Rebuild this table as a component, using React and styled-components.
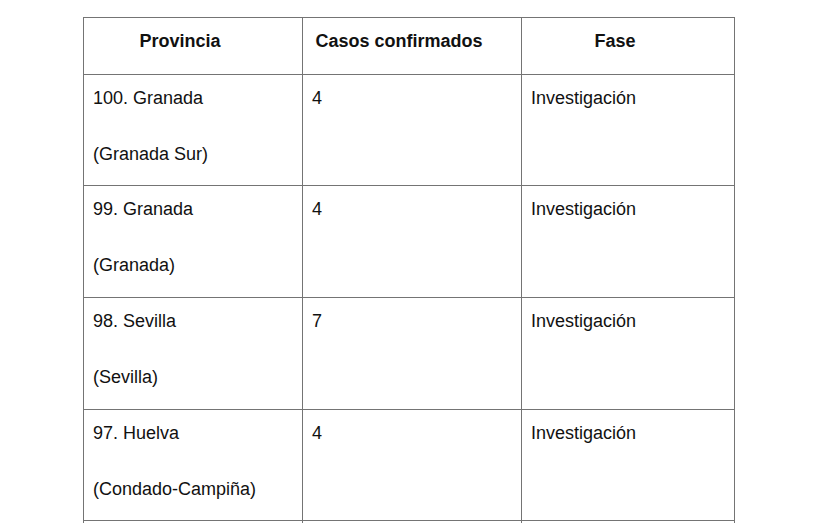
import React from "react";
import styled, { createGlobalStyle } from "styled-components";

const GlobalStyle = createGlobalStyle`
  html, body {
    margin: 0;
    padding: 0;
    background: #ffffff;
    overflow: hidden;
  }
  #root {
    height: 523px;
    overflow: hidden;
  }
`;

const rows = [
  { provincia: "100. Granada", zona: "(Granada Sur)", casos: "4", fase: "Investigación" },
  { provincia: "99. Granada", zona: "(Granada)", casos: "4", fase: "Investigación" },
  { provincia: "98. Sevilla", zona: "(Sevilla)", casos: "7", fase: "Investigación" },
  { provincia: "97. Huelva", zona: "(Condado-Campiña)", casos: "4", fase: "Investigación" },
];

const Page = styled.main`
  padding: 17px 0 0 83px;
  font-family: "Liberation Sans", Arial, Helvetica, sans-serif;
  color: #111111;
`;

const Table = styled.table`
  border-collapse: collapse;
  table-layout: fixed;
  width: 651px;
`;

const Col = styled.col`
  width: ${(p) => p.$w}px;
`;

const HeadCell = styled.th`
  border: 1px solid #747474;
  padding: 5px 35px 14.8px 9px;
  font-size: 18px;
  line-height: 36px;
  font-weight: 700;
  text-align: center;
  white-space: nowrap;
`;

const Cell = styled.td`
  border: 1px solid #747474;
  padding: 5px 9px 13.6px;
  font-size: 18px;
  line-height: 36px;
  vertical-align: top;
  text-align: left;
`;

const Line = styled.p`
  margin: 0;
  white-space: nowrap;

  & + & {
    margin-top: 20px;
  }
`;

export default function App() {
  return (
    <>
      <GlobalStyle />
      <Page>
        <Table>
          <colgroup>
            <Col $w={219} />
            <Col $w={219} />
            <Col $w={213} />
          </colgroup>
          <thead>
            <tr>
              <HeadCell>Provincia</HeadCell>
              <HeadCell>Casos confirmados</HeadCell>
              <HeadCell>Fase</HeadCell>
            </tr>
          </thead>
          <tbody>
            {rows.map((r) => (
              <tr key={r.provincia}>
                <Cell>
                  <Line>{r.provincia}</Line>
                  <Line>{r.zona}</Line>
                </Cell>
                <Cell>
                  <Line>{r.casos}</Line>
                </Cell>
                <Cell>
                  <Line>{r.fase}</Line>
                </Cell>
              </tr>
            ))}
            <tr>
              <Cell>
                <Line>&nbsp;</Line>
                <Line>&nbsp;</Line>
              </Cell>
              <Cell />
              <Cell />
            </tr>
          </tbody>
        </Table>
      </Page>
    </>
  );
}
